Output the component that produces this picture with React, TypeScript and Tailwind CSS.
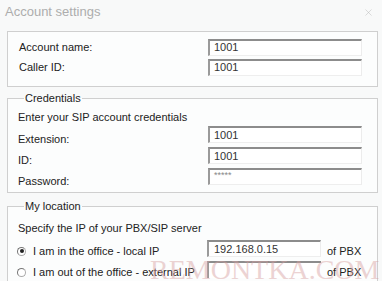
import { X } from 'lucide-react';

const inputCls =
  'h-[17px] w-[154px] bg-white border-t-2 border-l-2 border-r border-b border-t-[#8c8c8c] border-l-[#9a9a9a] border-r-[#ececec] border-b-[#eeeeee] px-[4px] text-[11px] leading-[13px] text-[#333] flex items-center';

const Field = ({ value, small }: { value: string; small?: boolean }) => (
  <div className={inputCls}>
    <span className={small ? 'text-[9px] text-[#888] -mt-[3px]' : ''}>{value}</span>
  </div>
);

const Row = ({ label, value, small }: { label: string; value: string; small?: boolean }) => (
  <div className="flex h-[21px] items-start justify-between">
    <span className="mt-[7px] leading-[13px]">{label}</span>
    <Field value={value} small={small} />
  </div>
);

export default function App() {
  return (
    <div
      className="relative w-[382px] h-[281px] overflow-hidden bg-[#f8f9f9] text-[11px] text-[#222]"
      style={{ fontFamily: '"Liberation Sans", Arial, sans-serif' }}
    >
      {/* Title bar */}
      <div className="flex h-[24px] items-center justify-between pl-[5px] pr-[8px]">
        <span className="text-[13px] text-[#adadad]">Account settings</span>
        <X className="h-[11px] w-[11px] text-[#b4b4b4]" strokeWidth={1} />
      </div>

      <div className="pl-[7px] pr-[4px]">
        {/* Account */}
        <div className="mt-[7px] h-[56px] border border-[#cfcfcf] bg-[#fcfdfd] pl-[11px] pr-[15px] pt-[6px] flex flex-col gap-[2px]">
          <div className="flex h-[18px] items-center justify-between">
            <span>Account name:</span>
            <Field value="1001" />
          </div>
          <div className="flex h-[18px] items-center justify-between">
            <span className="mt-[1px]">Caller ID:</span>
            <Field value="1001" />
          </div>
        </div>

        {/* Credentials */}
        <fieldset className="mt-[5px] h-[101px] border border-[#cfcfcf] bg-[#fcfdfd] pl-[10px] pr-[15px]">
          <legend className="ml-[6px] px-[1px] leading-[13px]">Credentials</legend>
          <div className="h-[21px] pt-[6px] leading-[13px]">Enter your SIP account credentials</div>
          <Row label="Extension:" value="1001" />
          <Row label="ID:" value="1001" />
          <Row label="Password:" value="*****" small />
        </fieldset>

        {/* My location */}
        <fieldset className="mt-[7px] h-[90px] border border-[#cfcfcf] bg-[#fcfdfd] pl-[10px] pr-[15px]">
          <legend className="ml-[6px] px-[1px] leading-[13px]">My location</legend>
          <div className="h-[22px] pt-[9px] leading-[13px]">Specify the IP of your PBX/SIP server</div>
          <div className="mt-[5px] flex h-[21px] items-start">
            <div className="flex w-[190px] items-center gap-[7px] mt-[3px] -ml-[1px]">
              <span className="flex h-[9px] w-[9px] items-center justify-center rounded-full border border-[#aaa] border-t-[#777] border-l-[#777] bg-white">
                <span className="h-[4px] w-[4px] rounded-full bg-[#222]" />
              </span>
              <span>I am in the office - local IP</span>
            </div>
            <div className="h-[17px] w-[114px] bg-white border-t-2 border-l-2 border-r border-b border-t-[#8c8c8c] border-l-[#9a9a9a] border-r-[#ececec] border-b-[#eeeeee] px-[5px] flex items-center text-[#333]">
              192.168.0.15
            </div>
            <span className="ml-[6px] mt-[3px]">of PBX</span>
          </div>
          <div className="flex h-[21px] items-start">
            <div className="flex w-[190px] items-center gap-[7px] mt-[3px] -ml-[1px]">
              <span className="h-[9px] w-[9px] rounded-full border border-[#aaa] border-t-[#777] border-l-[#777] bg-white" />
              <span>I am out of the office - external IP</span>
            </div>
            <div className="h-[17px] w-[114px] bg-white border-t-2 border-l-2 border-t-[#8c8c8c] border-l-[#9a9a9a]" />
            <span className="ml-[6px] mt-[3px]">of PBX</span>
          </div>
        </fieldset>
      </div>

      {/* Watermark */}
      <div
        className="pointer-events-none absolute left-[150px] top-[255px] text-[28px] leading-[30px] text-[#d7a0a0] opacity-45"
        style={{ fontFamily: '"Liberation Serif", serif' }}
      >
        REMONTKA.COM
      </div>
    </div>
  );
}
